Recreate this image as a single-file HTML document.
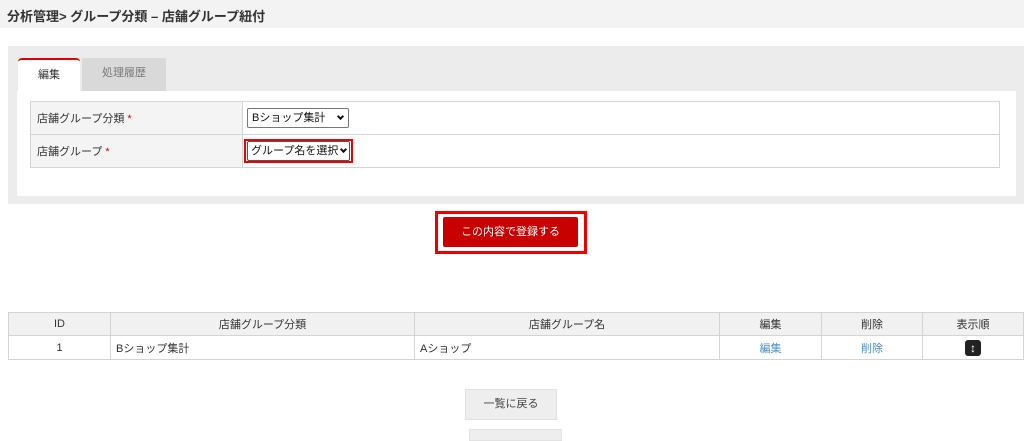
<!DOCTYPE html>
<html><head><meta charset="utf-8"><style>
*{box-sizing:border-box;margin:0;padding:0}
body{width:1024px;height:437px;overflow:hidden;background:#fff;font-family:"Liberation Sans","Noto Sans CJK JP",sans-serif;font-size:11px;color:#333;position:relative}
.abs{position:absolute}
.hdr{left:0;top:0;width:1024px;height:28px;background:#f3f3f3;font-size:13px;font-weight:bold;color:#333;padding:6px 0 0 7px}
.panel{left:8px;top:46px;width:1016px;height:158px;background:#ececec}
.tab{top:58px;height:33px;text-align:center;line-height:31px;font-size:11px}
.t1{left:18px;width:62px;background:#fff;border-top:2px solid #d00;border-radius:4px 4px 0 0;color:#333}
.t2{left:82px;width:84px;background:#d9d9d9;color:#777}
.inner{left:17px;top:91px;width:999px;height:105px;background:#fff}
table{border-collapse:collapse;position:absolute}
td,th{border:1px solid #d4d4d4}
.ft td{height:33px;padding:0 6px;font-size:11px}
.ft td.l{background:#f4f4f4;width:212px}
.req{color:#d00}
.sel{position:absolute;border:1px solid #777;border-radius:2px;height:20px;line-height:18px;padding:0 4px;font-size:11px;color:#111;background:#fff}
.chev{position:absolute;right:5px;top:5px;width:5px;height:5px;border-right:2px solid #111;border-bottom:2px solid #111;transform:rotate(45deg)}
.lt th{background:#f1f1f1;font-weight:normal;height:23px;font-size:11px}
.lt td{height:24px;font-size:11px}
.c{text-align:center}
a{color:#4a90c8;text-decoration:none}
</style></head><body>
<div class="abs hdr">分析管理&gt; グループ分類 – 店舗グループ紐付</div>
<div class="abs panel"></div>
<div class="abs tab t1">編集</div>
<div class="abs tab t2">処理履歴</div>
<div class="abs inner"></div>
<table class="ft" style="left:30px;top:101px;width:970px">
<tr><td class="l">店舗グループ分類 <span class="req">*</span></td><td></td></tr>
<tr><td class="l">店舗グループ <span class="req">*</span></td><td></td></tr>
</table>
<div class="sel" style="left:247px;top:108px;width:102px">Bショップ集計<span class="chev"></span></div>
<div class="abs" style="left:244px;top:139px;width:109px;height:24px;border:2px solid #e00"></div>
<div class="sel" style="left:247px;top:141px;width:103px;border-color:#555;padding:0 3px">グループ名を選択<span class="chev" style="right:3px"></span></div>
<div class="abs" style="left:435px;top:211px;width:152px;height:43px;border:3px solid #e00"></div>
<div class="abs" style="left:443px;top:217px;width:135px;height:30px;background:#c80000;border-radius:2px;color:#fff;text-align:center;line-height:30px;font-size:11px">この内容で登録する</div>
<table class="lt" style="left:8px;top:312px;width:1016px">
<tr><th style="width:102px">ID</th><th style="width:304px">店舗グループ分類</th><th style="width:305px">店舗グループ名</th><th style="width:102px">編集</th><th style="width:101px">削除</th><th>表示順</th></tr>
<tr><td class="c">1</td><td style="padding-left:5px">Bショップ集計</td><td style="padding-left:5px">Aショップ</td><td class="c"><a>編集</a></td><td class="c"><a>削除</a></td><td class="c"><span style="display:inline-block;width:16px;height:16px;background:#222;border-radius:3px;color:#fff;font-size:12px;line-height:16px;font-weight:bold;vertical-align:middle">↕</span></td></tr>
</table>
<div class="abs" style="left:465px;top:389px;width:92px;height:31px;background:#eee;border:1px solid #e2e2e2;text-align:center;line-height:29px;font-size:11px;color:#444">一覧に戻る</div>
<div class="abs" style="left:469px;top:429px;width:93px;height:12px;background:#eee;border:1px solid #e2e2e2"></div>
</body></html>
